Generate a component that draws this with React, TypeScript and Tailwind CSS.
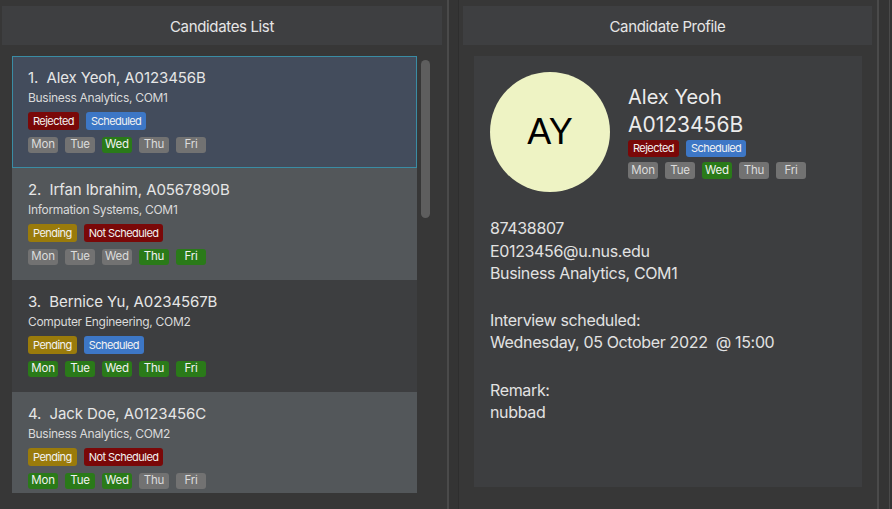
import React from "react";

type Day = { label: string; free: boolean };

type Candidate = {
  name: string;
  id: string;
  course: string;
  status: "Rejected" | "Pending";
  scheduled: boolean;
  days: boolean[];
};

const DAYS = ["Mon", "Tue", "Wed", "Thu", "Fri"];

const candidates: Candidate[] = [
  {
    name: "Alex Yeoh",
    id: "A0123456B",
    course: "Business Analytics, COM1",
    status: "Rejected",
    scheduled: true,
    days: [false, false, true, false, false],
  },
  {
    name: "Irfan Ibrahim",
    id: "A0567890B",
    course: "Information Systems, COM1",
    status: "Pending",
    scheduled: false,
    days: [false, false, false, true, true],
  },
  {
    name: "Bernice Yu",
    id: "A0234567B",
    course: "Computer Engineering, COM2",
    status: "Pending",
    scheduled: true,
    days: [true, true, true, true, true],
  },
  {
    name: "Jack Doe",
    id: "A0123456C",
    course: "Business Analytics, COM2",
    status: "Pending",
    scheduled: false,
    days: [true, true, true, false, false],
  },
];

const StatusTags = ({ c, h }: { c: Candidate; h: string }) => (
  <div className="flex flex-row gap-[7px]">
    <span
      className={`${h} px-[5px] rounded-[3px] text-[11px] tracking-[-0.55px] text-[#f2f2f2] flex items-center ${
        c.status === "Rejected" ? "bg-[#7a0808]" : "bg-[#9a7b0b]"
      }`}
    >
      {c.status}
    </span>
    <span
      className={`${h} px-[5px] rounded-[3px] text-[11px] tracking-[-0.55px] text-[#f2f2f2] flex items-center ${
        c.scheduled ? "bg-[#3d77c6]" : "bg-[#7a0808]"
      }`}
    >
      {c.scheduled ? "Scheduled" : "Not Scheduled"}
    </span>
  </div>
);

const DayTags = ({ days, h }: { days: boolean[]; h: string }) => {
  const list: Day[] = DAYS.map((d, i) => ({ label: d, free: days[i] }));
  return (
    <div className="flex flex-row gap-[7px]">
      {list.map((d) => (
        <span
          key={d.label}
          className={`${h} w-[30px] rounded-[3px] text-[11.5px] tracking-[-0.2px] flex items-center justify-center ${
            d.free ? "bg-[#2a7a19] text-[#f2f2f2]" : "bg-[#727272] text-[#dcdcdc]"
          }`}
        >
          {d.label}
        </span>
      ))}
    </div>
  );
};

const CandidateCard = ({
  c,
  index,
  selected,
}: {
  c: Candidate;
  index: number;
  selected: boolean;
}) => {
  const bg = selected
    ? "bg-[#434c5c] border border-[#3a8ca4] px-[15px] pt-[10px]"
    : index % 2 === 1
    ? "bg-[#53575a] px-[16px] pt-[11px]"
    : "bg-[#3d3e40] px-[16px] pt-[11px]";
  return (
    <div className={`h-[112px] shrink-0 ${bg}`}>
      <p className="text-[15px] leading-[22px] tracking-[-0.1px] text-[#e6e6e6] whitespace-pre">
        {`${index + 1}.  ${c.name}, ${c.id}`}
      </p>
      <p className="text-[12px] leading-[17px] tracking-[-0.3px] text-[#dadada]">{c.course}</p>
      <div className="mt-[6px]">
        <StatusTags c={c} h="h-[18px]" />
      </div>
      <div className="mt-[7px]">
        <DayTags days={c.days} h="h-[16px]" />
      </div>
    </div>
  );
};

const App = () => {
  const selected = candidates[0];
  return (
    <div className="w-[892px] h-[509px] flex flex-row bg-[#373737] font-['Inter',sans-serif] overflow-hidden">
      {/* left pane */}
      <section className="w-[447px] flex flex-col pt-[6px] pl-[2px] pr-[5px]">
        <div className="h-[39px] pt-[3px] bg-[#3e3f41] flex items-center justify-center text-[15px] tracking-[-0.35px] text-[#e6e6e6]">
          Candidates List
        </div>
        <div className="mt-[11px] ml-[10px] flex flex-row">
          <div className="w-[405px] h-[437px] flex flex-col overflow-hidden">
            {candidates.map((c, i) => (
              <CandidateCard key={c.id} c={c} index={i} selected={i === 0} />
            ))}
          </div>
          <div className="ml-[4px] mt-[4px] w-[9px] h-[158px] rounded-full bg-[#5e5e5e]" />
        </div>
      </section>

      {/* divider */}
      <div className="w-[12px] border-l-2 border-l-[#4a4a4a] border-r border-r-[#2e2e2e] bg-[#343434]" />

      {/* right pane */}
      <section className="w-[418px] flex flex-col pt-[6px] pl-[4px]">
        <div className="w-[409px] h-[39px] pt-[3px] bg-[#3e3f41] flex items-center justify-center text-[15px] tracking-[-0.35px] text-[#e6e6e6]">
          Candidate Profile
        </div>
        <div className="mt-[11px] ml-[11px] w-[388px] h-[431px] bg-[#3d3e40] px-[16px] pt-[16px] text-[#e2e2e2]">
          <div className="flex flex-row items-start">
            <div className="w-[120px] h-[120px] rounded-full bg-[#eef3c4] flex items-center justify-center text-[36px] text-black font-['Liberation_Sans',sans-serif]">
              AY
            </div>
            <div className="ml-[18px] mt-[11px] flex flex-col">
              <p className="text-[20px] leading-[28px] text-[#ececec]">{selected.name}</p>
              <p className="text-[21px] leading-[28px] text-[#ececec]">{selected.id}</p>
              <div className="mt-[1px]">
                <StatusTags c={selected} h="h-[17px]" />
              </div>
              <div className="mt-[5px]">
                <DayTags days={selected.days} h="h-[17px]" />
              </div>
            </div>
          </div>
          <div className="mt-[25px] text-[16px] leading-[22.5px] tracking-[-0.35px]">
            <p>87438807</p>
            <p>E0123456@u.nus.edu</p>
            <p>{selected.course}</p>
            <p className="mt-[24px]">Interview scheduled:</p>
            <p className="whitespace-pre">Wednesday, 05 October 2022  @ 15:00</p>
            <p className="mt-[25px]">Remark:</p>
            <p>nubbad</p>
          </div>
        </div>
      </section>

      {/* right edge */}
      <div className="w-[15px] border-l-2 border-l-[#4a4a4a] bg-[#343434] flex flex-row justify-end pr-[2px]">
        <div className="w-px h-full bg-[#4a4a4a]" />
      </div>
    </div>
  );
};

export default App;
